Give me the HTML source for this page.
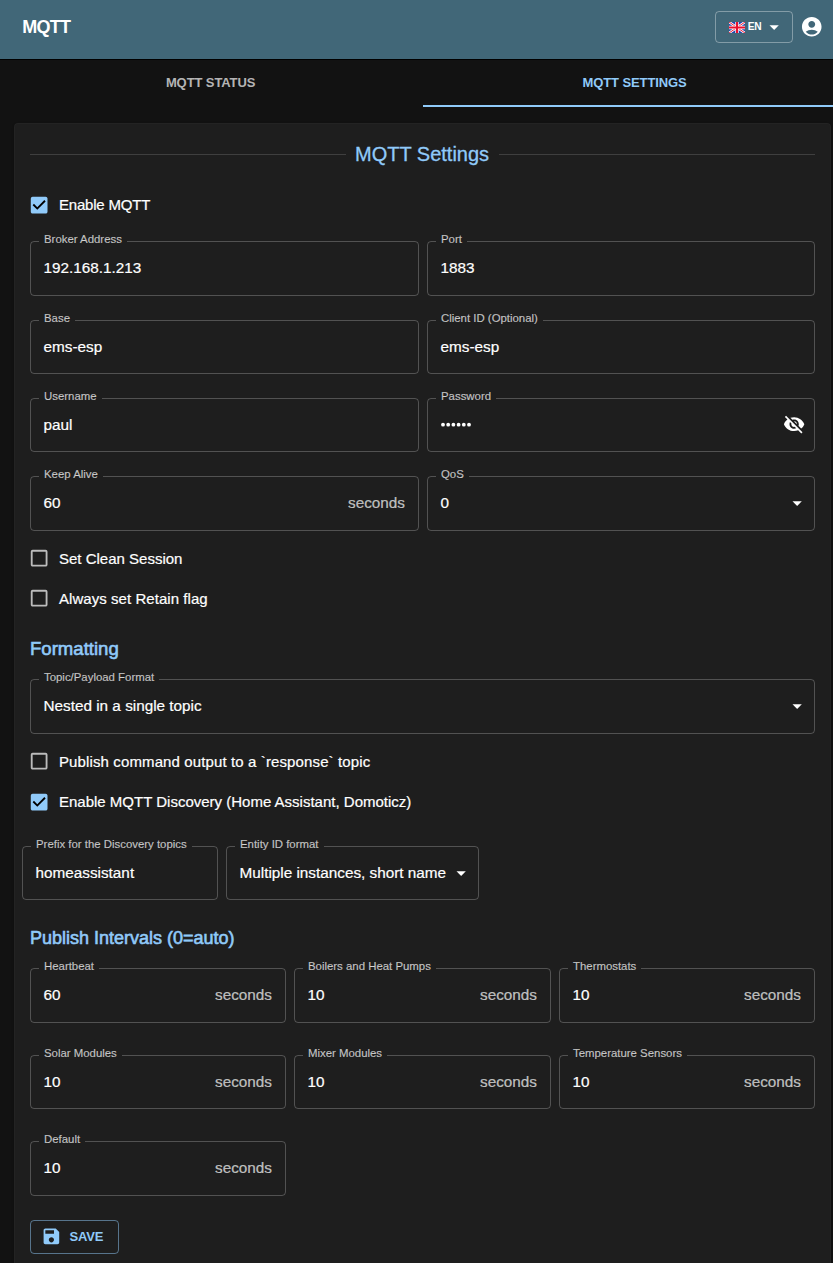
<!DOCTYPE html>
<html><head><meta charset="utf-8"><style>
html,body{margin:0;padding:0;background:#121212;overflow:hidden;width:833px;height:1263px}
#root{position:relative;width:845px;height:1263px;overflow:hidden;font-family:"Liberation Sans",sans-serif}
.t{position:absolute;line-height:0;white-space:pre}
.f{position:absolute;box-sizing:border-box;border:1px solid rgba(255,255,255,0.23);border-radius:4px}
.lb{position:absolute;background:#1e1e1e;padding:0 5px;font-size:11.4px;-webkit-text-stroke:0.15px rgba(255,255,255,0.7);line-height:12px;height:12px;color:rgba(255,255,255,0.7);white-space:pre}
</style></head><body><div id="root">
<div style="position:absolute;left:0;top:0;width:845px;height:59px;background:#416778"></div>
<div style="position:absolute;left:0;top:59px;width:845px;height:1px;background:#000"></div>
<div class="t" style="left:22.30px;top:26.76px;font-size:18px;font-weight:700;color:#fff;letter-spacing:-0.75px;">MQTT</div>
<div style="position:absolute;left:715px;top:11px;width:78px;height:32px;box-sizing:border-box;border:1px solid rgba(255,255,255,0.35);border-radius:4px"></div>
<svg style="position:absolute;left:729px;top:22px" width="16" height="11" viewBox="0 0 60 40" preserveAspectRatio="none"><rect width="60" height="40" fill="#1f48b0"/><path d="M0,0 L60,40 M60,0 L0,40" stroke="#fff" stroke-width="9"/><path d="M0,0 L60,40 M60,0 L0,40" stroke="#e8102e" stroke-width="3.5"/><path d="M30,0 V40 M0,20 H60" stroke="#fff" stroke-width="13"/><path d="M30,0 V40 M0,20 H60" stroke="#e8102e" stroke-width="8"/></svg>
<div class="t" style="left:747.80px;top:27.27px;font-size:10.2px;font-weight:700;color:#fff;letter-spacing:-0.4px;">EN</div>
<svg style="position:absolute;left:762.9px;top:15.9px;" width="22.29" height="22.29" viewBox="0 0 24 24"><path fill="#fff" d="M7 10l5 5 5-5z"/></svg>
<svg style="position:absolute;left:800px;top:15px;" width="23.5" height="23.5" viewBox="0 0 24 24"><path fill="#fff" d="M12 2C6.48 2 2 6.48 2 12s4.48 10 10 10 10-4.48 10-10S17.52 2 12 2zm0 4c1.93 0 3.5 1.57 3.5 3.5S13.93 13 12 13s-3.5-1.57-3.5-3.5S10.07 6 12 6zm0 14c-2.03 0-4.43-.82-6.14-2.88C7.55 15.8 9.68 15 12 15s4.45.8 6.14 2.12C16.43 19.18 14.03 20 12 20z"/></svg>
<div class="t" style="left:210.60px;transform:translateX(-50%);top:82.50px;font-size:13px;font-weight:700;color:rgba(255,255,255,0.7);letter-spacing:-0.1px;">MQTT STATUS</div>
<div class="t" style="left:634.60px;transform:translateX(-50%);top:82.50px;font-size:13px;font-weight:700;color:#90caf9;letter-spacing:-0.1px;">MQTT SETTINGS</div>
<div style="position:absolute;left:423px;top:105px;width:422px;height:2px;background:#90caf9"></div>
<div style="position:absolute;left:14px;top:123px;width:817px;height:1200px;background:#1e1e1e;border-radius:4px;box-shadow:inset 0 0 0 1px rgba(255,255,255,0.025),0 2px 1px -1px rgba(0,0,0,0.2),0 1px 1px 0 rgba(0,0,0,0.14),0 1px 3px 0 rgba(0,0,0,0.12)"></div>
<div style="position:absolute;left:30px;top:154px;width:316px;height:1px;background:rgba(255,255,255,0.15)"></div>
<div style="position:absolute;left:499px;top:154px;width:316px;height:1px;background:rgba(255,255,255,0.15)"></div>
<div class="t" style="left:355.00px;top:154.07px;font-size:20px;font-weight:400;color:#90caf9;letter-spacing:0px;-webkit-text-stroke:0.3px #90caf9;">MQTT Settings</div>
<svg style="position:absolute;left:28.21px;top:193.81px;" width="22.29" height="22.29" viewBox="0 0 24 24"><path fill="#90caf9" d="M19 3H5c-1.11 0-2 .9-2 2v14c0 1.1.89 2 2 2h14c1.11 0 2-.9 2-2V5c0-1.1-.89-2-2-2z"/><path fill="#000" d="M10 17l-5-5 1.41-1.41L10 14.17l7.59-7.59L19 8l-9 9z"/></svg>
<div class="t" style="left:59.00px;top:205.20px;font-size:15.0px;font-weight:400;color:#fff;letter-spacing:-0.2px;-webkit-text-stroke:0.2px #fff;">Enable MQTT</div>
<div class="f" style="left:30px;top:241px;width:389px;height:55px"></div>
<div class="lb" style="left:39px;top:233.34px">Broker Address</div>
<div class="t" style="left:43.50px;top:267.90px;font-size:15.3px;font-weight:400;color:#fff;letter-spacing:0px;-webkit-text-stroke:0.2px #fff;">192.168.1.213</div>
<div class="f" style="left:427px;top:241px;width:388px;height:55px"></div>
<div class="lb" style="left:436px;top:233.34px">Port</div>
<div class="t" style="left:440.50px;top:267.90px;font-size:15.3px;font-weight:400;color:#fff;letter-spacing:0px;-webkit-text-stroke:0.2px #fff;">1883</div>
<div class="f" style="left:30px;top:320px;width:389px;height:54px"></div>
<div class="lb" style="left:39px;top:312.34px">Base</div>
<div class="t" style="left:43.50px;top:346.90px;font-size:15.3px;font-weight:400;color:#fff;letter-spacing:0px;-webkit-text-stroke:0.2px #fff;">ems-esp</div>
<div class="f" style="left:427px;top:320px;width:388px;height:54px"></div>
<div class="lb" style="left:436px;top:312.34px">Client ID (Optional)</div>
<div class="t" style="left:440.50px;top:346.90px;font-size:15.3px;font-weight:400;color:#fff;letter-spacing:0px;-webkit-text-stroke:0.2px #fff;">ems-esp</div>
<div class="f" style="left:30px;top:398px;width:389px;height:54px"></div>
<div class="lb" style="left:39px;top:390.34px">Username</div>
<div class="t" style="left:43.50px;top:424.90px;font-size:15.3px;font-weight:400;color:#fff;letter-spacing:0px;-webkit-text-stroke:0.2px #fff;">paul</div>
<div class="f" style="left:427px;top:398px;width:388px;height:54px"></div>
<div class="lb" style="left:436px;top:390.34px">Password</div>
<div class="t" style="left:440.50px;top:424.90px;font-size:15.3px;font-weight:400;color:#fff;letter-spacing:0px;-webkit-text-stroke:0.2px #fff;"></div>
<svg style="position:absolute;left:782.70px;top:412.90px;" width="22.29" height="22.29" viewBox="0 0 24 24"><path fill="#fff" d="M12 7c2.76 0 5 2.24 5 5 0 .65-.13 1.26-.36 1.83l2.92 2.92c1.51-1.26 2.7-2.89 3.43-4.75-1.73-4.39-6-7.5-11-7.5-1.4 0-2.74.25-3.98.7l2.16 2.16C10.74 7.130 11.35 7 12 7zM2 4.27l2.28 2.28.46.46C3.08 8.3 1.78 10.02 1 12c1.73 4.39 6 7.5 11 7.5 1.55 0 3.030-.3 4.38-.84l.42.42L19.73 22 21 20.73 3.27 3 2 4.27zM7.53 9.8l1.55 1.55c-.05.21-.08.43-.08.65 0 1.66 1.34 3 3 3 .22 0 .44-.03.65-.08l1.55 1.55c-.67.33-1.41.53-2.2.53-2.76 0-5-2.240-5-5 0-.79.2-1.53.53-2.2zm4.31-.78l3.15 3.15.02-.16c0-1.66-1.34-3-3-3l-.17.01z"/></svg>
<svg style="position:absolute;left:441px;top:422px;" width="32" height="6" viewBox="0 0 32 6"><circle cx="2.00" cy="2.7" r="1.9" fill="#fff"/><circle cx="7.20" cy="2.7" r="1.9" fill="#fff"/><circle cx="12.40" cy="2.7" r="1.9" fill="#fff"/><circle cx="17.60" cy="2.7" r="1.9" fill="#fff"/><circle cx="22.80" cy="2.7" r="1.9" fill="#fff"/><circle cx="28.00" cy="2.7" r="1.9" fill="#fff"/></svg>
<div class="f" style="left:30px;top:476px;width:389px;height:55px"></div>
<div class="lb" style="left:39px;top:468.34px">Keep Alive</div>
<div class="t" style="left:43.50px;top:502.90px;font-size:15.3px;font-weight:400;color:#fff;letter-spacing:0px;-webkit-text-stroke:0.2px #fff;">60</div>
<div class="t" style="right:440.00px;top:502.90px;font-size:15.3px;font-weight:400;color:rgba(255,255,255,0.7);letter-spacing:0px;-webkit-text-stroke:0.2px rgba(255,255,255,0.7);">seconds</div>
<div class="f" style="left:427px;top:476px;width:388px;height:55px"></div>
<div class="lb" style="left:436px;top:468.34px">QoS</div>
<div class="t" style="left:440.50px;top:502.90px;font-size:15.3px;font-weight:400;color:#fff;letter-spacing:0px;-webkit-text-stroke:0.2px #fff;">0</div>
<svg style="position:absolute;left:785.71px;top:492.04px;" width="22.29" height="22.29" viewBox="0 0 24 24"><path fill="#fff" d="M7 10l5 5 5-5z"/></svg>
<svg style="position:absolute;left:28.21px;top:547.31px;" width="22.29" height="22.29" viewBox="0 0 24 24"><path fill="rgba(255,255,255,0.7)" d="M19 5v14H5V5h14m0-2H5c-1.1 0-2 .9-2 2v14c0 1.1.9 2 2 2h14c1.1 0 2-.9 2-2V5c0-1.1-.9-2-2-2z"/></svg>
<div class="t" style="left:59.00px;top:559.20px;font-size:15.0px;font-weight:400;color:#fff;letter-spacing:0px;-webkit-text-stroke:0.2px #fff;">Set Clean Session</div>
<svg style="position:absolute;left:28.21px;top:587.31px;" width="22.29" height="22.29" viewBox="0 0 24 24"><path fill="rgba(255,255,255,0.7)" d="M19 5v14H5V5h14m0-2H5c-1.1 0-2 .9-2 2v14c0 1.1.9 2 2 2h14c1.1 0 2-.9 2-2V5c0-1.1-.9-2-2-2z"/></svg>
<div class="t" style="left:59.00px;top:599.20px;font-size:15.0px;font-weight:400;color:#fff;letter-spacing:0.05px;-webkit-text-stroke:0.2px #fff;">Always set Retain flag</div>
<div class="t" style="left:30.00px;top:648.57px;font-size:18.57px;font-weight:400;color:#90caf9;letter-spacing:0px;-webkit-text-stroke:0.6px #90caf9;">Formatting</div>
<div class="f" style="left:30px;top:679px;width:785px;height:55px"></div>
<div class="lb" style="left:39px;top:671.34px">Topic/Payload Format</div>
<div class="t" style="left:43.50px;top:705.90px;font-size:15.3px;font-weight:400;color:#fff;letter-spacing:0px;-webkit-text-stroke:0.2px #fff;">Nested in a single topic</div>
<svg style="position:absolute;left:785.71px;top:695.04px;" width="22.29" height="22.29" viewBox="0 0 24 24"><path fill="#fff" d="M7 10l5 5 5-5z"/></svg>
<svg style="position:absolute;left:28.21px;top:750.31px;" width="22.29" height="22.29" viewBox="0 0 24 24"><path fill="rgba(255,255,255,0.7)" d="M19 5v14H5V5h14m0-2H5c-1.1 0-2 .9-2 2v14c0 1.1.9 2 2 2h14c1.1 0 2-.9 2-2V5c0-1.1-.9-2-2-2z"/></svg>
<div class="t" style="left:59.00px;top:762.20px;font-size:15.0px;font-weight:400;color:#fff;letter-spacing:0.12px;-webkit-text-stroke:0.2px #fff;">Publish command output to a `response` topic</div>
<svg style="position:absolute;left:28.21px;top:790.81px;" width="22.29" height="22.29" viewBox="0 0 24 24"><path fill="#90caf9" d="M19 3H5c-1.11 0-2 .9-2 2v14c0 1.1.89 2 2 2h14c1.11 0 2-.9 2-2V5c0-1.1-.89-2-2-2z"/><path fill="#000" d="M10 17l-5-5 1.41-1.41L10 14.17l7.59-7.59L19 8l-9 9z"/></svg>
<div class="t" style="left:59.00px;top:802.20px;font-size:15.0px;font-weight:400;color:#fff;letter-spacing:0.0px;-webkit-text-stroke:0.2px #fff;">Enable MQTT Discovery (Home Assistant, Domoticz)</div>
<div class="f" style="left:22px;top:846px;width:196px;height:54px"></div>
<div class="lb" style="left:31px;top:838.34px">Prefix for the Discovery topics</div>
<div class="t" style="left:35.50px;top:872.90px;font-size:15.3px;font-weight:400;color:#fff;letter-spacing:0px;-webkit-text-stroke:0.2px #fff;">homeassistant</div>
<div class="f" style="left:226px;top:846px;width:253px;height:54px"></div>
<div class="lb" style="left:235px;top:838.34px">Entity ID format</div>
<div class="t" style="left:239.50px;top:872.90px;font-size:15.3px;font-weight:400;color:#fff;letter-spacing:0px;-webkit-text-stroke:0.2px #fff;">Multiple instances, short name</div>
<svg style="position:absolute;left:449.71px;top:862.04px;" width="22.29" height="22.29" viewBox="0 0 24 24"><path fill="#fff" d="M7 10l5 5 5-5z"/></svg>
<div class="t" style="left:30.00px;top:937.96px;font-size:18px;font-weight:400;color:#90caf9;letter-spacing:0px;-webkit-text-stroke:0.6px #90caf9;">Publish Intervals (0=auto)</div>
<div class="f" style="left:30px;top:968px;width:256px;height:55px"></div>
<div class="lb" style="left:39px;top:960.34px">Heartbeat</div>
<div class="t" style="left:43.50px;top:994.90px;font-size:15.3px;font-weight:400;color:#fff;letter-spacing:0px;-webkit-text-stroke:0.2px #fff;">60</div>
<div class="t" style="right:573.00px;top:994.90px;font-size:15.3px;font-weight:400;color:rgba(255,255,255,0.7);letter-spacing:0px;-webkit-text-stroke:0.2px rgba(255,255,255,0.7);">seconds</div>
<div class="f" style="left:294px;top:968px;width:257px;height:55px"></div>
<div class="lb" style="left:303px;top:960.34px">Boilers and Heat Pumps</div>
<div class="t" style="left:307.50px;top:994.90px;font-size:15.3px;font-weight:400;color:#fff;letter-spacing:0px;-webkit-text-stroke:0.2px #fff;">10</div>
<div class="t" style="right:308.00px;top:994.90px;font-size:15.3px;font-weight:400;color:rgba(255,255,255,0.7);letter-spacing:0px;-webkit-text-stroke:0.2px rgba(255,255,255,0.7);">seconds</div>
<div class="f" style="left:559px;top:968px;width:256px;height:55px"></div>
<div class="lb" style="left:568px;top:960.34px">Thermostats</div>
<div class="t" style="left:572.50px;top:994.90px;font-size:15.3px;font-weight:400;color:#fff;letter-spacing:0px;-webkit-text-stroke:0.2px #fff;">10</div>
<div class="t" style="right:44.00px;top:994.90px;font-size:15.3px;font-weight:400;color:rgba(255,255,255,0.7);letter-spacing:0px;-webkit-text-stroke:0.2px rgba(255,255,255,0.7);">seconds</div>
<div class="f" style="left:30px;top:1055px;width:256px;height:54px"></div>
<div class="lb" style="left:39px;top:1047.34px">Solar Modules</div>
<div class="t" style="left:43.50px;top:1081.90px;font-size:15.3px;font-weight:400;color:#fff;letter-spacing:0px;-webkit-text-stroke:0.2px #fff;">10</div>
<div class="t" style="right:573.00px;top:1081.90px;font-size:15.3px;font-weight:400;color:rgba(255,255,255,0.7);letter-spacing:0px;-webkit-text-stroke:0.2px rgba(255,255,255,0.7);">seconds</div>
<div class="f" style="left:294px;top:1055px;width:257px;height:54px"></div>
<div class="lb" style="left:303px;top:1047.34px">Mixer Modules</div>
<div class="t" style="left:307.50px;top:1081.90px;font-size:15.3px;font-weight:400;color:#fff;letter-spacing:0px;-webkit-text-stroke:0.2px #fff;">10</div>
<div class="t" style="right:308.00px;top:1081.90px;font-size:15.3px;font-weight:400;color:rgba(255,255,255,0.7);letter-spacing:0px;-webkit-text-stroke:0.2px rgba(255,255,255,0.7);">seconds</div>
<div class="f" style="left:559px;top:1055px;width:256px;height:54px"></div>
<div class="lb" style="left:568px;top:1047.34px">Temperature Sensors</div>
<div class="t" style="left:572.50px;top:1081.90px;font-size:15.3px;font-weight:400;color:#fff;letter-spacing:0px;-webkit-text-stroke:0.2px #fff;">10</div>
<div class="t" style="right:44.00px;top:1081.90px;font-size:15.3px;font-weight:400;color:rgba(255,255,255,0.7);letter-spacing:0px;-webkit-text-stroke:0.2px rgba(255,255,255,0.7);">seconds</div>
<div class="f" style="left:30px;top:1141px;width:256px;height:55px"></div>
<div class="lb" style="left:39px;top:1133.34px">Default</div>
<div class="t" style="left:43.50px;top:1167.90px;font-size:15.3px;font-weight:400;color:#fff;letter-spacing:0px;-webkit-text-stroke:0.2px #fff;">10</div>
<div class="t" style="right:573.00px;top:1167.90px;font-size:15.3px;font-weight:400;color:rgba(255,255,255,0.7);letter-spacing:0px;-webkit-text-stroke:0.2px rgba(255,255,255,0.7);">seconds</div>
<div style="position:absolute;left:30px;top:1220px;width:89px;height:34px;box-sizing:border-box;border:1px solid rgba(144,202,249,0.5);border-radius:4px"></div>
<svg style="position:absolute;left:41.2px;top:1226.2px;" width="20.8" height="20.8" viewBox="0 0 24 24"><path fill="#90caf9" d="M17 3H5c-1.11 0-2 .9-2 2v14c0 1.1.89 2 2 2h14c1.1 0 2-.9 2-2V7l-4-4zm-5 16c-1.66 0-3-1.34-3-3s1.34-3 3-3 3 1.34 3 3-1.34 3-3 3zm3-10H5V5h10v4z"/></svg>
<div class="t" style="left:69.50px;top:1236.50px;font-size:13px;font-weight:700;color:#90caf9;letter-spacing:-0.2px;">SAVE</div>
</div></body></html>
